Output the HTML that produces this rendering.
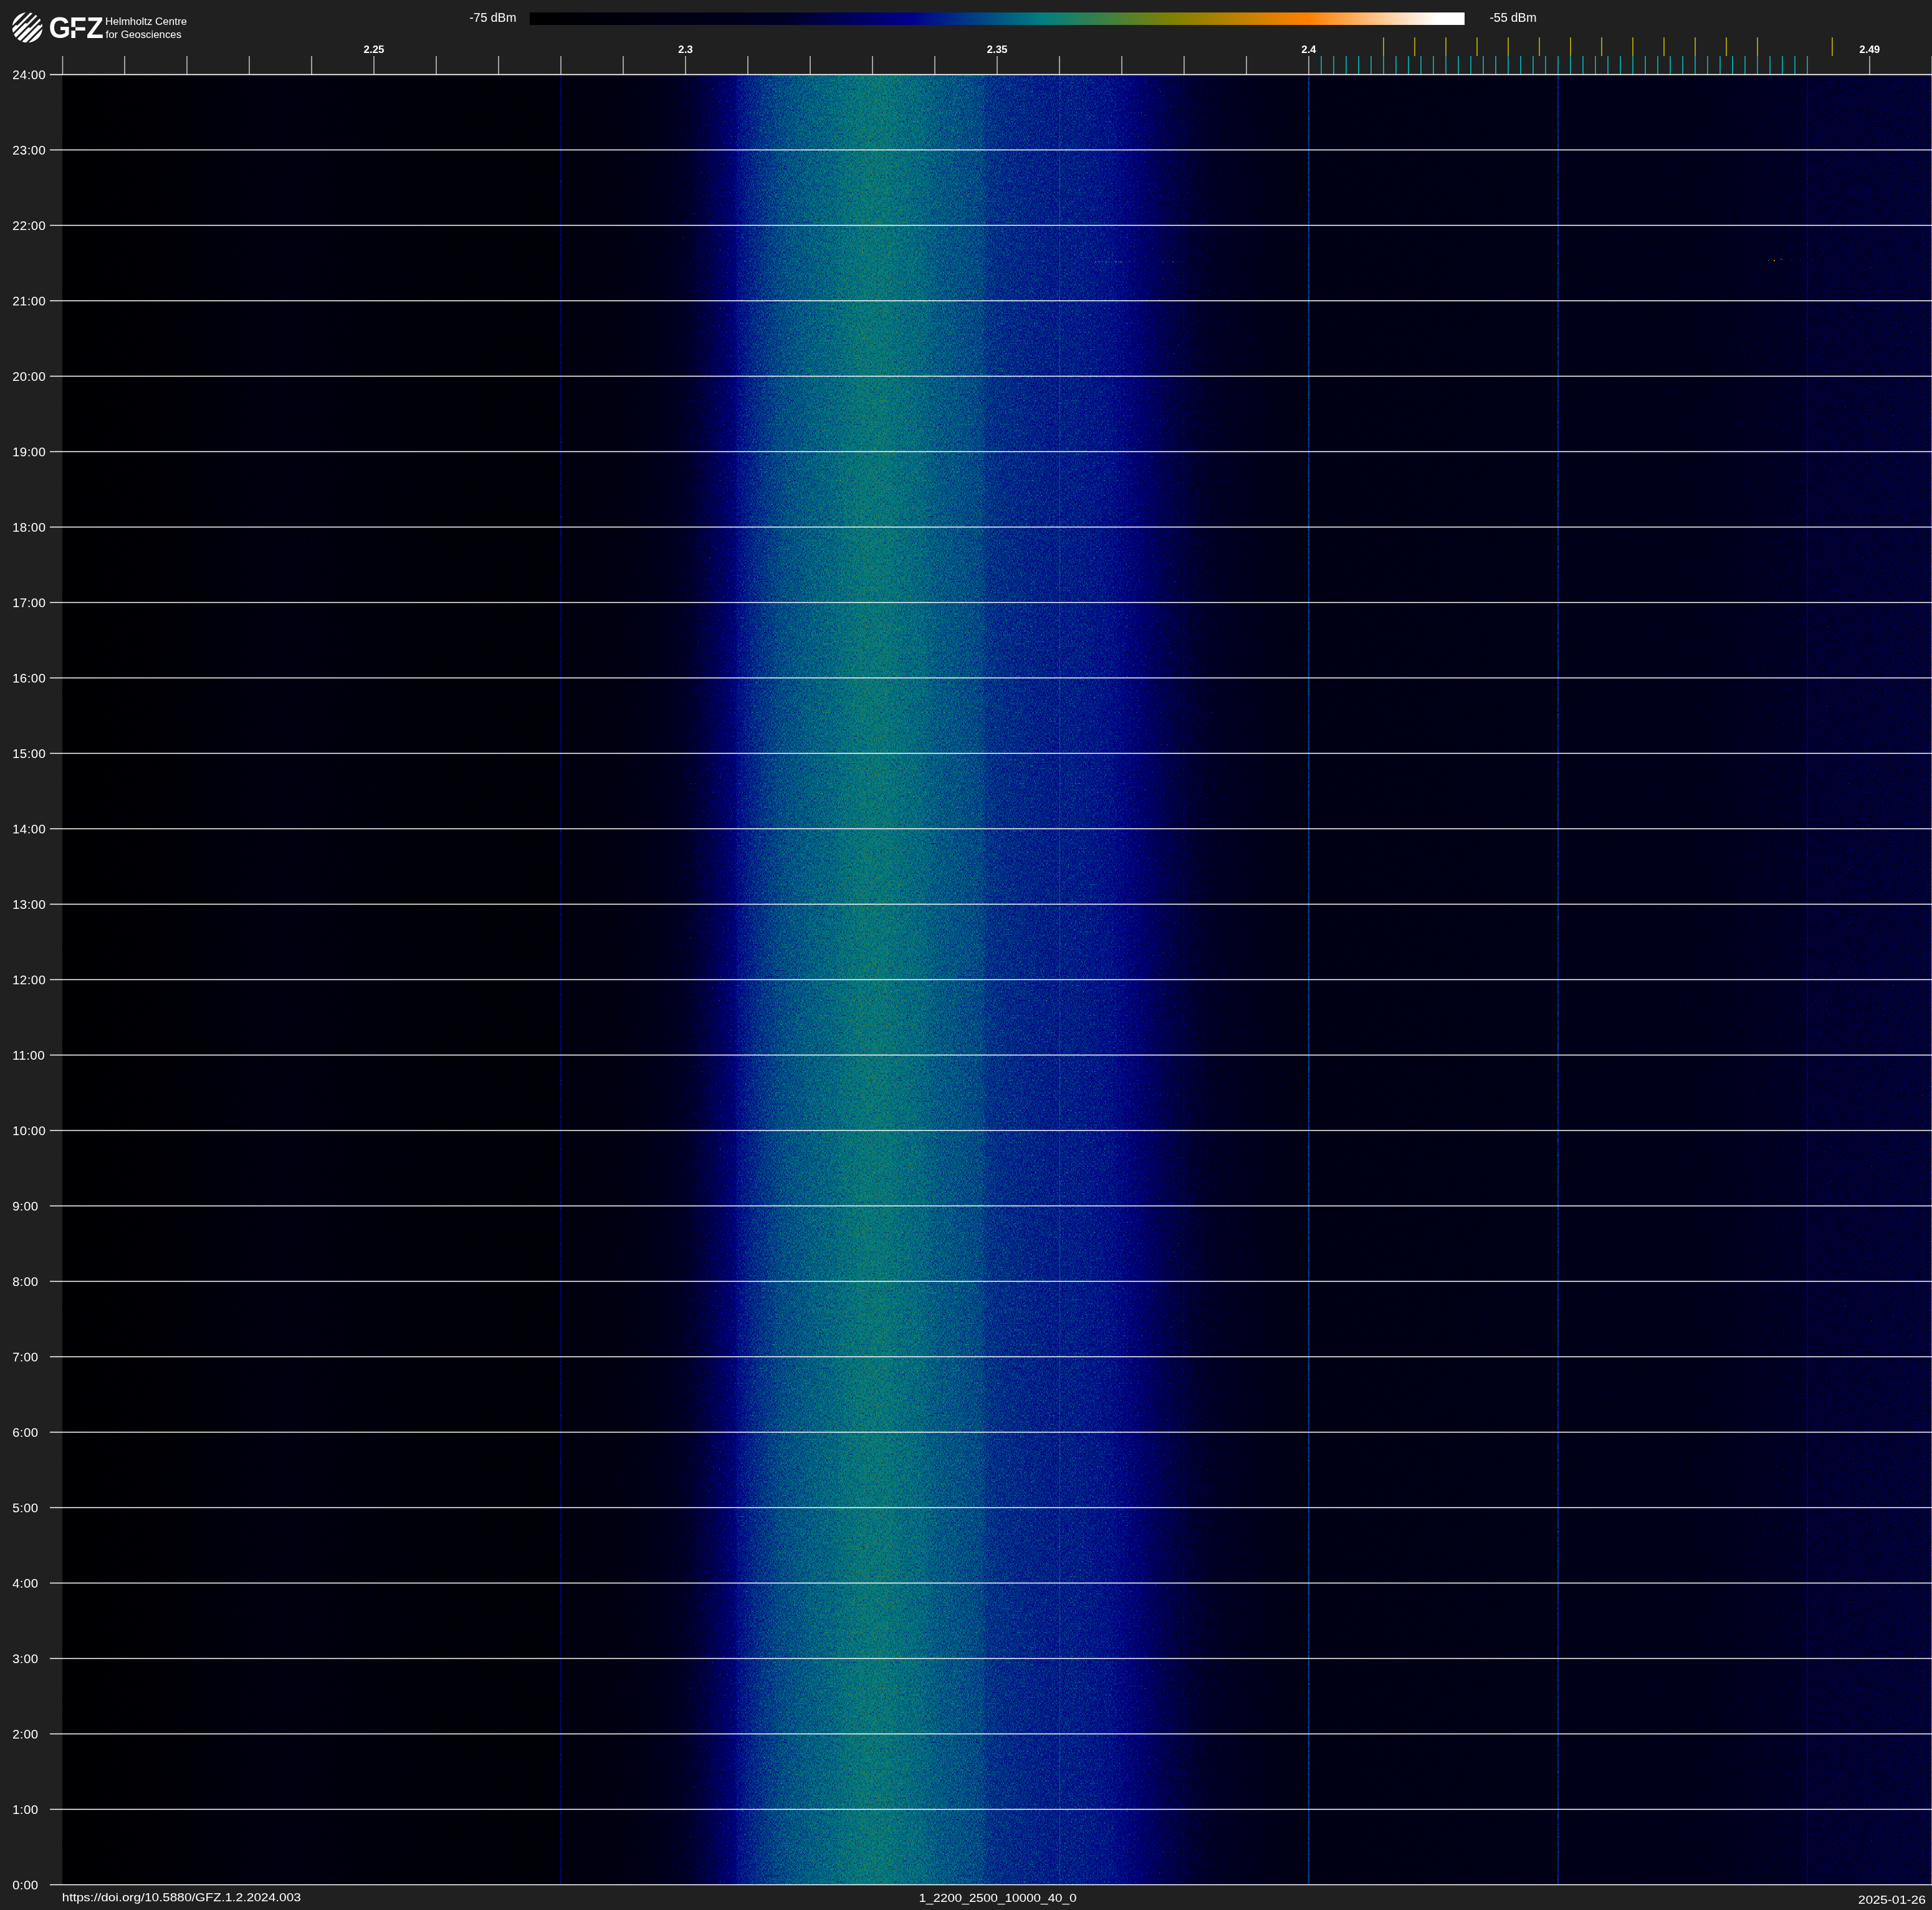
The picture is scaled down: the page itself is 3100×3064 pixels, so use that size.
<!DOCTYPE html>
<html lang="en"><head><meta charset="utf-8"><title>GFZ spectrum 1_2200_2500_10000_40_0 2025-01-26</title>
<style>
html,body{margin:0;padding:0;background:#202020;}
body{width:3100px;height:3064px;overflow:hidden;position:relative;font-family:"Liberation Sans",sans-serif;color:#fff;}
svg{position:absolute;left:0;top:0;display:block;will-change:transform;}
text{font-family:"Liberation Sans",sans-serif;fill:#fff;}
.hl{stroke:#fff;stroke-width:1.3;}
.tk{stroke:#cbcbcb;stroke-width:1.5;}
.ble{stroke:rgb(2,196,200);stroke-width:1.5;}
.wifi{stroke:rgb(203,196,3);stroke-width:1.5;}
.yl{font-size:20.5px;letter-spacing:0.45px;}
.fl{font-size:17px;font-weight:bold;text-anchor:middle;}
.ft{font-size:19px;}
</style></head><body>
<svg width="3100" height="3064" viewBox="0 0 3100 3064">
<defs>
<linearGradient id="val" gradientUnits="userSpaceOnUse" x1="100" y1="0" x2="3100" y2="0">
<stop offset="0.0000" stop-color="#050000"/>
<stop offset="0.0500" stop-color="#0b0000"/>
<stop offset="0.1000" stop-color="#1c0000"/>
<stop offset="0.1200" stop-color="#1f0000"/>
<stop offset="0.1533" stop-color="#1a0000"/>
<stop offset="0.2000" stop-color="#120000"/>
<stop offset="0.2600" stop-color="#110000"/>
<stop offset="0.2663" stop-color="#120000"/>
<stop offset="0.2670" stop-color="#1c0000"/>
<stop offset="0.2943" stop-color="#210000"/>
<stop offset="0.3080" stop-color="#2a0000"/>
<stop offset="0.3220" stop-color="#360000"/>
<stop offset="0.3357" stop-color="#450000"/>
<stop offset="0.3493" stop-color="#550000"/>
<stop offset="0.3603" stop-color="#620000"/>
<stop offset="0.3607" stop-color="#690000"/>
<stop offset="0.3700" stop-color="#730000"/>
<stop offset="0.3843" stop-color="#7d0000"/>
<stop offset="0.4017" stop-color="#830000"/>
<stop offset="0.4143" stop-color="#860000"/>
<stop offset="0.4150" stop-color="#870000"/>
<stop offset="0.4277" stop-color="#8b0000"/>
<stop offset="0.4413" stop-color="#8b0000"/>
<stop offset="0.4483" stop-color="#880000"/>
<stop offset="0.4600" stop-color="#860000"/>
<stop offset="0.4647" stop-color="#830000"/>
<stop offset="0.4700" stop-color="#810000"/>
<stop offset="0.4767" stop-color="#800000"/>
<stop offset="0.4833" stop-color="#7e0000"/>
<stop offset="0.4917" stop-color="#7c0000"/>
<stop offset="0.4943" stop-color="#770000"/>
<stop offset="0.5000" stop-color="#750000"/>
<stop offset="0.5103" stop-color="#730000"/>
<stop offset="0.5310" stop-color="#6f0000"/>
<stop offset="0.5403" stop-color="#700000"/>
<stop offset="0.5610" stop-color="#6b0000"/>
<stop offset="0.5747" stop-color="#600000"/>
<stop offset="0.5887" stop-color="#540000"/>
<stop offset="0.6023" stop-color="#4a0000"/>
<stop offset="0.6160" stop-color="#410000"/>
<stop offset="0.6300" stop-color="#3b0000"/>
<stop offset="0.6437" stop-color="#330000"/>
<stop offset="0.6643" stop-color="#290000"/>
<stop offset="0.7333" stop-color="#2b0000"/>
<stop offset="0.7997" stop-color="#2d0000"/>
<stop offset="0.8003" stop-color="#300000"/>
<stop offset="0.8767" stop-color="#330000"/>
<stop offset="0.9023" stop-color="#3c0000"/>
<stop offset="0.9283" stop-color="#410000"/>
<stop offset="0.9330" stop-color="#420000"/>
<stop offset="0.9337" stop-color="#460000"/>
<stop offset="1.0000" stop-color="#490000"/>
</linearGradient>
<linearGradient id="val2" gradientUnits="userSpaceOnUse" x1="0" y1="0" x2="3000" y2="0">
<stop offset="0.0000" stop-color="#05ff00"/>
<stop offset="0.0500" stop-color="#0bff00"/>
<stop offset="0.1000" stop-color="#1cff00"/>
<stop offset="0.1200" stop-color="#1fff00"/>
<stop offset="0.1533" stop-color="#1aff00"/>
<stop offset="0.2000" stop-color="#12ff00"/>
<stop offset="0.2600" stop-color="#11ff00"/>
<stop offset="0.2663" stop-color="#12ff00"/>
<stop offset="0.2670" stop-color="#1cff00"/>
<stop offset="0.2943" stop-color="#21ff00"/>
<stop offset="0.3080" stop-color="#2aff00"/>
<stop offset="0.3220" stop-color="#36ff00"/>
<stop offset="0.3357" stop-color="#45ff00"/>
<stop offset="0.3493" stop-color="#55ff00"/>
<stop offset="0.3603" stop-color="#62ff00"/>
<stop offset="0.3607" stop-color="#69ff00"/>
<stop offset="0.3700" stop-color="#73ff00"/>
<stop offset="0.3843" stop-color="#7dff00"/>
<stop offset="0.4017" stop-color="#83ff00"/>
<stop offset="0.4143" stop-color="#86ff00"/>
<stop offset="0.4150" stop-color="#87ff00"/>
<stop offset="0.4277" stop-color="#8bff00"/>
<stop offset="0.4413" stop-color="#8bff00"/>
<stop offset="0.4483" stop-color="#88ff00"/>
<stop offset="0.4600" stop-color="#86ff00"/>
<stop offset="0.4647" stop-color="#83ff00"/>
<stop offset="0.4700" stop-color="#81ff00"/>
<stop offset="0.4767" stop-color="#80ff00"/>
<stop offset="0.4833" stop-color="#7eff00"/>
<stop offset="0.4917" stop-color="#7cff00"/>
<stop offset="0.4943" stop-color="#77ff00"/>
<stop offset="0.5000" stop-color="#75ff00"/>
<stop offset="0.5103" stop-color="#73ff00"/>
<stop offset="0.5310" stop-color="#6fff00"/>
<stop offset="0.5403" stop-color="#70ff00"/>
<stop offset="0.5610" stop-color="#6bff00"/>
<stop offset="0.5747" stop-color="#60ff00"/>
<stop offset="0.5887" stop-color="#54ff00"/>
<stop offset="0.6023" stop-color="#4aff00"/>
<stop offset="0.6160" stop-color="#41ff00"/>
<stop offset="0.6300" stop-color="#3bff00"/>
<stop offset="0.6437" stop-color="#33ff00"/>
<stop offset="0.6643" stop-color="#29ff00"/>
<stop offset="0.7333" stop-color="#2bff00"/>
<stop offset="0.7997" stop-color="#2dff00"/>
<stop offset="0.8003" stop-color="#30ff00"/>
<stop offset="0.8767" stop-color="#33ff00"/>
<stop offset="0.9023" stop-color="#3cff00"/>
<stop offset="0.9283" stop-color="#41ff00"/>
<stop offset="0.9330" stop-color="#42ff00"/>
<stop offset="0.9337" stop-color="#46ff00"/>
<stop offset="1.0000" stop-color="#49ff00"/>
</linearGradient>
<pattern id="rows" patternUnits="userSpaceOnUse" x="100" y="120" width="3000" height="2">
<rect x="0" y="0" width="3000" height="1" fill="url(#val2)"/>
<rect x="799" y="0" width="2" height="1" fill="#62ff00"/>
<rect x="1999" y="0" width="2" height="1" fill="#78ff00"/>
<rect x="2399" y="0" width="2" height="1" fill="#73ff00"/>
<rect x="2799" y="0" width="2" height="1" fill="#5cff00"/>
<rect x="1600" y="0" width="1" height="1" fill="#80ff00"/>
<rect x="399" y="0" width="2" height="1" fill="#2bff00"/>
<rect x="1199" y="0" width="1" height="1" fill="#85ff00"/>
<rect x="500" y="0" width="1" height="1" fill="#29ff00"/>
<rect x="79" y="0" width="1" height="1" fill="#21ff00"/>
<rect x="1799" y="0" width="1" height="1" fill="#5cff00"/>
<rect x="2999" y="0" width="1" height="1" fill="#ccff00"/>
</pattern>
<linearGradient id="cbar" x1="0" y1="0" x2="1" y2="0">
<stop offset="0.000" stop-color="rgb(0,0,0)"/>
<stop offset="0.267" stop-color="rgb(0,0,35)"/>
<stop offset="0.407" stop-color="rgb(0,0,139)"/>
<stop offset="0.549" stop-color="rgb(0,128,128)"/>
<stop offset="0.688" stop-color="rgb(128,128,0)"/>
<stop offset="0.833" stop-color="rgb(255,128,0)"/>
<stop offset="0.971" stop-color="rgb(255,255,255)"/>
<stop offset="1.000" stop-color="rgb(255,255,255)"/>
</linearGradient>
<filter id="spec" filterUnits="userSpaceOnUse" x="100" y="120" width="3000" height="2904" color-interpolation-filters="sRGB">
<feTurbulence type="fractalNoise" baseFrequency="0.83 0.71" numOctaves="1" seed="7" result="n0"/>
<feColorMatrix in="n0" type="matrix" values="1 0 0 0 0  1 0 0 0 0  1 0 0 0 0  0 0 0 0 1" result="n1"/>
<feComponentTransfer in="n1" result="ns">
<feFuncR type="table" tableValues="0.2826 0.2894 0.2963 0.3032 0.3100 0.3169 0.3237 0.3306 0.3375 0.3443 0.3512 0.3580 0.3649 0.3718 0.3786 0.3855 0.3923 0.3992 0.4060 0.4121 0.4172 0.4223 0.4273 0.4324 0.4373 0.4422 0.4470 0.4519 0.4563 0.4600 0.4636 0.4672 0.4709 0.4745 0.4782 0.4818 0.4854 0.4891 0.4927 0.4964 0.5000 0.5036 0.5073 0.5109 0.5146 0.5182 0.5218 0.5255 0.5291 0.5328 0.5364 0.5400 0.5437 0.5489 0.5550 0.5610 0.5671 0.5737 0.5808 0.5878 0.5949 0.6020 0.6128 0.6262 0.6397 0.6531 0.6666 0.6800 0.6935 0.7069 0.7204 0.7338 0.7473 0.7608 0.7742 0.7877 0.8011 0.8146 0.8280 0.8415 0.8549"/>
<feFuncG type="table" tableValues="0.2826 0.2894 0.2963 0.3032 0.3100 0.3169 0.3237 0.3306 0.3375 0.3443 0.3512 0.3580 0.3649 0.3718 0.3786 0.3855 0.3923 0.3992 0.4060 0.4121 0.4172 0.4223 0.4273 0.4324 0.4373 0.4422 0.4470 0.4519 0.4563 0.4600 0.4636 0.4672 0.4709 0.4745 0.4782 0.4818 0.4854 0.4891 0.4927 0.4964 0.5000 0.5036 0.5073 0.5109 0.5146 0.5182 0.5218 0.5255 0.5291 0.5328 0.5364 0.5400 0.5437 0.5489 0.5550 0.5610 0.5671 0.5737 0.5808 0.5878 0.5949 0.6020 0.6128 0.6262 0.6397 0.6531 0.6666 0.6800 0.6935 0.7069 0.7204 0.7338 0.7473 0.7608 0.7742 0.7877 0.8011 0.8146 0.8280 0.8415 0.8549"/>
<feFuncB type="table" tableValues="0.2826 0.2894 0.2963 0.3032 0.3100 0.3169 0.3237 0.3306 0.3375 0.3443 0.3512 0.3580 0.3649 0.3718 0.3786 0.3855 0.3923 0.3992 0.4060 0.4121 0.4172 0.4223 0.4273 0.4324 0.4373 0.4422 0.4470 0.4519 0.4563 0.4600 0.4636 0.4672 0.4709 0.4745 0.4782 0.4818 0.4854 0.4891 0.4927 0.4964 0.5000 0.5036 0.5073 0.5109 0.5146 0.5182 0.5218 0.5255 0.5291 0.5328 0.5364 0.5400 0.5437 0.5489 0.5550 0.5610 0.5671 0.5737 0.5808 0.5878 0.5949 0.6020 0.6128 0.6262 0.6397 0.6531 0.6666 0.6800 0.6935 0.7069 0.7204 0.7338 0.7473 0.7608 0.7742 0.7877 0.8011 0.8146 0.8280 0.8415 0.8549"/>
</feComponentTransfer>
<feColorMatrix in="SourceGraphic" type="matrix" values="0 0 0 0 1  0 0 0 0 1  0 0 0 0 1  0 1 0 0 0" result="mask"/>
<feColorMatrix in="SourceGraphic" type="matrix" values="1 0 0 0 0  1 0 0 0 0  1 0 0 0 0  0 0 0 0 1" result="src"/>
<feComposite in="ns" in2="mask" operator="in" result="ev"/>
<feOffset in="ev" dx="0" dy="1" result="od"/>
<feMerge result="n"><feMergeNode in="od"/><feMergeNode in="ev"/></feMerge>
<feComposite in="src" in2="n" operator="arithmetic" k1="0" k2="1" k3="1" k4="-0.5" result="v"/>
<feComponentTransfer in="v">
<feFuncR type="table" tableValues="0.000 0.000 0.000 0.000 0.000 0.000 0.000 0.000 0.000 0.000 0.000 0.000 0.000 0.000 0.000 0.000 0.000 0.000 0.000 0.000 0.000 0.000 0.000 0.000 0.000 0.000 0.000 0.000 0.000 0.000 0.000 0.000 0.000 0.000 0.000 0.000 0.000 0.000 0.000 0.000 0.000 0.000 0.000 0.000 0.000 0.000 0.000 0.000 0.000 0.000 0.000 0.000 0.000 0.000 0.000 0.004 0.040 0.076 0.112 0.148 0.184 0.220 0.256 0.293 0.329 0.365 0.401 0.437 0.473 0.509 0.543 0.578 0.612 0.646 0.681 0.715 0.749 0.784 0.818 0.852 0.887 0.921 0.955 0.990 1.000 1.000 1.000 1.000 1.000 1.000 1.000 1.000 1.000 1.000 1.000 1.000 1.000 1.000 1.000 1.000 1.000"/>
<feFuncG type="table" tableValues="0.000 0.000 0.000 0.000 0.000 0.000 0.000 0.000 0.000 0.000 0.000 0.000 0.000 0.000 0.000 0.000 0.000 0.000 0.000 0.000 0.000 0.000 0.000 0.000 0.000 0.000 0.000 0.000 0.000 0.000 0.000 0.000 0.000 0.000 0.000 0.000 0.000 0.000 0.000 0.000 0.000 0.011 0.046 0.081 0.117 0.152 0.187 0.223 0.258 0.293 0.329 0.364 0.399 0.435 0.470 0.502 0.502 0.502 0.502 0.502 0.502 0.502 0.502 0.502 0.502 0.502 0.502 0.502 0.502 0.502 0.502 0.502 0.502 0.502 0.502 0.502 0.502 0.502 0.502 0.502 0.502 0.502 0.502 0.502 0.527 0.563 0.599 0.635 0.672 0.708 0.744 0.780 0.816 0.852 0.888 0.924 0.960 0.996 1.000 1.000 1.000"/>
<feFuncB type="table" tableValues="0.000 0.005 0.010 0.015 0.021 0.026 0.031 0.036 0.041 0.046 0.051 0.057 0.062 0.067 0.072 0.077 0.082 0.087 0.093 0.098 0.103 0.108 0.113 0.118 0.123 0.129 0.134 0.146 0.175 0.204 0.233 0.263 0.292 0.321 0.350 0.379 0.408 0.437 0.466 0.496 0.525 0.544 0.541 0.538 0.535 0.532 0.529 0.526 0.523 0.520 0.517 0.514 0.511 0.508 0.505 0.498 0.462 0.426 0.390 0.354 0.318 0.282 0.246 0.209 0.173 0.137 0.101 0.065 0.029 0.000 0.000 0.000 0.000 0.000 0.000 0.000 0.000 0.000 0.000 0.000 0.000 0.000 0.000 0.000 0.051 0.123 0.196 0.268 0.341 0.413 0.486 0.558 0.630 0.703 0.775 0.848 0.920 0.993 1.000 1.000 1.000"/>
</feComponentTransfer>
</filter>
</defs>
<g filter="url(#spec)" shape-rendering="crispEdges">
<rect x="100" y="120" width="3000" height="2904" fill="url(#val)"/>
<rect x="899" y="120" width="2" height="2904" fill="#620000"/>
<rect x="2099" y="120" width="2" height="2904" fill="#780000"/>
<rect x="2499" y="120" width="2" height="2904" fill="#730000"/>
<rect x="2899" y="120" width="2" height="2904" fill="#5c0000"/>
<rect x="1700" y="120" width="1" height="2904" fill="#800000"/>
<rect x="499" y="120" width="2" height="2904" fill="#2b0000"/>
<rect x="1299" y="120" width="1" height="2904" fill="#850000"/>
<rect x="600" y="120" width="1" height="2904" fill="#290000"/>
<rect x="179" y="120" width="1" height="2904" fill="#210000"/>
<rect x="1899" y="120" width="1" height="2904" fill="#5c0000"/>
<rect x="3099" y="120" width="1" height="2904" fill="#cc0000"/>
<rect x="100" y="120" width="3000" height="2904" fill="url(#rows)"/>
<rect x="1757" y="419" width="2" height="1" fill="#a80000"/>
<rect x="1757" y="420" width="2" height="1" fill="#a8ff00"/>
<rect x="1762" y="419" width="3" height="1" fill="#800000"/>
<rect x="1762" y="420" width="3" height="1" fill="#80ff00"/>
<rect x="1768" y="419" width="2" height="1" fill="#780000"/>
<rect x="1768" y="420" width="2" height="1" fill="#78ff00"/>
<rect x="1773" y="419" width="3" height="1" fill="#870000"/>
<rect x="1773" y="420" width="3" height="1" fill="#87ff00"/>
<rect x="1779" y="419" width="1" height="1" fill="#9e0000"/>
<rect x="1779" y="420" width="1" height="1" fill="#9eff00"/>
<rect x="1783" y="419" width="2" height="1" fill="#7a0000"/>
<rect x="1783" y="420" width="2" height="1" fill="#7aff00"/>
<rect x="1789" y="419" width="3" height="1" fill="#940000"/>
<rect x="1789" y="420" width="3" height="1" fill="#94ff00"/>
<rect x="1794" y="419" width="2" height="1" fill="#800000"/>
<rect x="1794" y="420" width="2" height="1" fill="#80ff00"/>
<rect x="1797" y="419" width="2" height="1" fill="#990000"/>
<rect x="1797" y="420" width="2" height="1" fill="#99ff00"/>
<rect x="1800" y="419" width="1" height="1" fill="#8f0000"/>
<rect x="1800" y="420" width="1" height="1" fill="#8fff00"/>
<rect x="1838" y="419" width="2" height="1" fill="#660000"/>
<rect x="1838" y="420" width="2" height="1" fill="#66ff00"/>
<rect x="1851" y="419" width="4" height="1" fill="#690000"/>
<rect x="1851" y="420" width="4" height="1" fill="#69ff00"/>
<rect x="1864" y="419" width="3" height="1" fill="#780000"/>
<rect x="1864" y="420" width="3" height="1" fill="#78ff00"/>
<rect x="1872" y="419" width="2" height="1" fill="#660000"/>
<rect x="1872" y="420" width="2" height="1" fill="#66ff00"/>
<rect x="1881" y="419" width="2" height="1" fill="#850000"/>
<rect x="1881" y="420" width="2" height="1" fill="#85ff00"/>
<rect x="1888" y="419" width="3" height="1" fill="#660000"/>
<rect x="1888" y="420" width="3" height="1" fill="#66ff00"/>
<rect x="1897" y="419" width="2" height="1" fill="#610000"/>
<rect x="1897" y="420" width="2" height="1" fill="#61ff00"/>
<rect x="2837" y="417" width="1" height="1" fill="#8c0000"/>
<rect x="2837" y="418" width="1" height="1" fill="#8cff00"/>
<rect x="2846" y="417" width="2" height="1" fill="#d40000"/>
<rect x="2846" y="418" width="2" height="1" fill="#d4ff00"/>
<rect x="2857" y="415" width="2" height="1" fill="#8c0000"/>
<rect x="2857" y="416" width="2" height="1" fill="#8cff00"/>
<rect x="2874" y="417" width="1" height="1" fill="#780000"/>
<rect x="2874" y="418" width="1" height="1" fill="#78ff00"/>
<rect x="2888" y="417" width="1" height="1" fill="#730000"/>
<rect x="2888" y="418" width="1" height="1" fill="#73ff00"/>
</g>
<rect x="850" y="20" width="1500" height="20" fill="url(#cbar)"/>
<text x="753.2" y="35.2" style="font-size:20.5px" textLength="75.3" lengthAdjust="spacingAndGlyphs">-75 dBm</text>
<text x="2390.2" y="35.2" style="font-size:20.5px" textLength="75.3" lengthAdjust="spacingAndGlyphs">-55 dBm</text>
<line class="tk" x1="100.5" y1="90" x2="100.5" y2="120"/>
<line class="tk" x1="200.0" y1="90" x2="200.0" y2="120"/>
<line class="tk" x1="300.0" y1="90" x2="300.0" y2="120"/>
<line class="tk" x1="400.0" y1="90" x2="400.0" y2="120"/>
<line class="tk" x1="500.0" y1="90" x2="500.0" y2="120"/>
<line class="tk" x1="600.0" y1="90" x2="600.0" y2="120"/>
<line class="tk" x1="700.0" y1="90" x2="700.0" y2="120"/>
<line class="tk" x1="800.0" y1="90" x2="800.0" y2="120"/>
<line class="tk" x1="900.0" y1="90" x2="900.0" y2="120"/>
<line class="tk" x1="1000.0" y1="90" x2="1000.0" y2="120"/>
<line class="tk" x1="1100.0" y1="90" x2="1100.0" y2="120"/>
<line class="tk" x1="1200.0" y1="90" x2="1200.0" y2="120"/>
<line class="tk" x1="1300.0" y1="90" x2="1300.0" y2="120"/>
<line class="tk" x1="1400.0" y1="90" x2="1400.0" y2="120"/>
<line class="tk" x1="1500.0" y1="90" x2="1500.0" y2="120"/>
<line class="tk" x1="1600.0" y1="90" x2="1600.0" y2="120"/>
<line class="tk" x1="1700.0" y1="90" x2="1700.0" y2="120"/>
<line class="tk" x1="1800.0" y1="90" x2="1800.0" y2="120"/>
<line class="tk" x1="1900.0" y1="90" x2="1900.0" y2="120"/>
<line class="tk" x1="2000.0" y1="90" x2="2000.0" y2="120"/>
<line class="tk" x1="2100.0" y1="90" x2="2100.0" y2="120"/>
<line class="tk" x1="3000.0" y1="90" x2="3000.0" y2="120"/>
<line class="tk" x1="3100.0" y1="90" x2="3100.0" y2="120"/>
<line class="ble" x1="2120.0" y1="90" x2="2120.0" y2="119"/>
<line class="ble" x1="2140.0" y1="90" x2="2140.0" y2="119"/>
<line class="ble" x1="2160.0" y1="90" x2="2160.0" y2="119"/>
<line class="ble" x1="2180.0" y1="90" x2="2180.0" y2="119"/>
<line class="ble" x1="2200.0" y1="90" x2="2200.0" y2="119"/>
<line class="ble" x1="2220.0" y1="90" x2="2220.0" y2="119"/>
<line class="ble" x1="2240.0" y1="90" x2="2240.0" y2="119"/>
<line class="ble" x1="2260.0" y1="90" x2="2260.0" y2="119"/>
<line class="ble" x1="2280.0" y1="90" x2="2280.0" y2="119"/>
<line class="ble" x1="2300.0" y1="90" x2="2300.0" y2="119"/>
<line class="ble" x1="2320.0" y1="90" x2="2320.0" y2="119"/>
<line class="ble" x1="2340.0" y1="90" x2="2340.0" y2="119"/>
<line class="ble" x1="2360.0" y1="90" x2="2360.0" y2="119"/>
<line class="ble" x1="2380.0" y1="90" x2="2380.0" y2="119"/>
<line class="ble" x1="2400.0" y1="90" x2="2400.0" y2="119"/>
<line class="ble" x1="2420.0" y1="90" x2="2420.0" y2="119"/>
<line class="ble" x1="2440.0" y1="90" x2="2440.0" y2="119"/>
<line class="ble" x1="2460.0" y1="90" x2="2460.0" y2="119"/>
<line class="ble" x1="2480.0" y1="90" x2="2480.0" y2="119"/>
<line class="ble" x1="2500.0" y1="90" x2="2500.0" y2="119"/>
<line class="ble" x1="2520.0" y1="90" x2="2520.0" y2="119"/>
<line class="ble" x1="2540.0" y1="90" x2="2540.0" y2="119"/>
<line class="ble" x1="2560.0" y1="90" x2="2560.0" y2="119"/>
<line class="ble" x1="2580.0" y1="90" x2="2580.0" y2="119"/>
<line class="ble" x1="2600.0" y1="90" x2="2600.0" y2="119"/>
<line class="ble" x1="2620.0" y1="90" x2="2620.0" y2="119"/>
<line class="ble" x1="2640.0" y1="90" x2="2640.0" y2="119"/>
<line class="ble" x1="2660.0" y1="90" x2="2660.0" y2="119"/>
<line class="ble" x1="2680.0" y1="90" x2="2680.0" y2="119"/>
<line class="ble" x1="2700.0" y1="90" x2="2700.0" y2="119"/>
<line class="ble" x1="2720.0" y1="90" x2="2720.0" y2="119"/>
<line class="ble" x1="2740.0" y1="90" x2="2740.0" y2="119"/>
<line class="ble" x1="2760.0" y1="90" x2="2760.0" y2="119"/>
<line class="ble" x1="2780.0" y1="90" x2="2780.0" y2="119"/>
<line class="ble" x1="2800.0" y1="90" x2="2800.0" y2="119"/>
<line class="ble" x1="2820.0" y1="90" x2="2820.0" y2="119"/>
<line class="ble" x1="2840.0" y1="90" x2="2840.0" y2="119"/>
<line class="ble" x1="2860.0" y1="90" x2="2860.0" y2="119"/>
<line class="ble" x1="2880.0" y1="90" x2="2880.0" y2="119"/>
<line class="ble" x1="2900.0" y1="90" x2="2900.0" y2="119"/>
<line class="wifi" x1="2220.0" y1="60" x2="2220.0" y2="90"/>
<line class="wifi" x1="2270.0" y1="60" x2="2270.0" y2="90"/>
<line class="wifi" x1="2320.0" y1="60" x2="2320.0" y2="90"/>
<line class="wifi" x1="2370.0" y1="60" x2="2370.0" y2="90"/>
<line class="wifi" x1="2420.0" y1="60" x2="2420.0" y2="90"/>
<line class="wifi" x1="2470.0" y1="60" x2="2470.0" y2="90"/>
<line class="wifi" x1="2520.0" y1="60" x2="2520.0" y2="90"/>
<line class="wifi" x1="2570.0" y1="60" x2="2570.0" y2="90"/>
<line class="wifi" x1="2620.0" y1="60" x2="2620.0" y2="90"/>
<line class="wifi" x1="2670.0" y1="60" x2="2670.0" y2="90"/>
<line class="wifi" x1="2720.0" y1="60" x2="2720.0" y2="90"/>
<line class="wifi" x1="2770.0" y1="60" x2="2770.0" y2="90"/>
<line class="wifi" x1="2820.0" y1="60" x2="2820.0" y2="90"/>
<line class="wifi" x1="2940.0" y1="60" x2="2940.0" y2="90"/>
<text class="fl" x="600" y="84.8">2.25</text>
<text class="fl" x="1100" y="84.8">2.3</text>
<text class="fl" x="1600" y="84.8">2.35</text>
<text class="fl" x="2100" y="84.8">2.4</text>
<text class="fl" x="3000" y="84.8">2.49</text>
<line class="hl" x1="80" y1="3023.50" x2="3100" y2="3023.50"/>
<text class="yl" x="20" y="3030.9">0:00</text>
<line class="hl" x1="80" y1="2902.50" x2="3100" y2="2902.50"/>
<text class="yl" x="20" y="2909.9">1:00</text>
<line class="hl" x1="80" y1="2781.50" x2="3100" y2="2781.50"/>
<text class="yl" x="20" y="2788.9">2:00</text>
<line class="hl" x1="80" y1="2660.50" x2="3100" y2="2660.50"/>
<text class="yl" x="20" y="2667.9">3:00</text>
<line class="hl" x1="80" y1="2539.50" x2="3100" y2="2539.50"/>
<text class="yl" x="20" y="2546.9">4:00</text>
<line class="hl" x1="80" y1="2418.50" x2="3100" y2="2418.50"/>
<text class="yl" x="20" y="2425.9">5:00</text>
<line class="hl" x1="80" y1="2297.50" x2="3100" y2="2297.50"/>
<text class="yl" x="20" y="2304.9">6:00</text>
<line class="hl" x1="80" y1="2176.50" x2="3100" y2="2176.50"/>
<text class="yl" x="20" y="2183.9">7:00</text>
<line class="hl" x1="80" y1="2055.50" x2="3100" y2="2055.50"/>
<text class="yl" x="20" y="2062.9">8:00</text>
<line class="hl" x1="80" y1="1934.50" x2="3100" y2="1934.50"/>
<text class="yl" x="20" y="1941.9">9:00</text>
<line class="hl" x1="80" y1="1813.50" x2="3100" y2="1813.50"/>
<text class="yl" x="20" y="1820.9">10:00</text>
<line class="hl" x1="80" y1="1692.50" x2="3100" y2="1692.50"/>
<text class="yl" x="20" y="1699.9">11:00</text>
<line class="hl" x1="80" y1="1571.50" x2="3100" y2="1571.50"/>
<text class="yl" x="20" y="1578.9">12:00</text>
<line class="hl" x1="80" y1="1450.50" x2="3100" y2="1450.50"/>
<text class="yl" x="20" y="1457.9">13:00</text>
<line class="hl" x1="80" y1="1329.50" x2="3100" y2="1329.50"/>
<text class="yl" x="20" y="1336.9">14:00</text>
<line class="hl" x1="80" y1="1208.50" x2="3100" y2="1208.50"/>
<text class="yl" x="20" y="1215.9">15:00</text>
<line class="hl" x1="80" y1="1087.50" x2="3100" y2="1087.50"/>
<text class="yl" x="20" y="1094.9">16:00</text>
<line class="hl" x1="80" y1="966.50" x2="3100" y2="966.50"/>
<text class="yl" x="20" y="973.9">17:00</text>
<line class="hl" x1="80" y1="845.50" x2="3100" y2="845.50"/>
<text class="yl" x="20" y="852.9">18:00</text>
<line class="hl" x1="80" y1="724.50" x2="3100" y2="724.50"/>
<text class="yl" x="20" y="731.9">19:00</text>
<line class="hl" x1="80" y1="603.50" x2="3100" y2="603.50"/>
<text class="yl" x="20" y="610.9">20:00</text>
<line class="hl" x1="80" y1="482.50" x2="3100" y2="482.50"/>
<text class="yl" x="20" y="489.9">21:00</text>
<line class="hl" x1="80" y1="361.50" x2="3100" y2="361.50"/>
<text class="yl" x="20" y="368.9">22:00</text>
<line class="hl" x1="80" y1="240.50" x2="3100" y2="240.50"/>
<text class="yl" x="20" y="247.9">23:00</text>
<line class="hl" x1="80" y1="119.70" x2="3100" y2="119.70" style="stroke-width:1.7"/>
<text class="yl" x="20" y="127.1">24:00</text>
<text class="ft" x="99.5" y="3050" textLength="383.5" lengthAdjust="spacingAndGlyphs">https://doi.org/10.5880/GFZ.1.2.2024.003</text>
<text class="ft" x="1474.5" y="3051" textLength="253" lengthAdjust="spacingAndGlyphs">1_2200_2500_10000_40_0</text>
<text class="ft" x="2981.6" y="3054" textLength="108.5" lengthAdjust="spacingAndGlyphs">2025-01-26</text>
<g id="logo">
<circle cx="43.9" cy="44.1" r="24.3" fill="#fff"/>
<g fill="#202020">
<polygon points="12.62,48.62 48.62,12.62 52.47,16.47 28.17,40.77 25.16,40.16 14.66,50.66"/>
<polygon points="18.75,54.75 54.75,18.75 58.60,22.60 43.55,37.65 40.54,37.04 20.79,56.79"/>
<polygon points="24.87,60.87 60.87,24.87 64.72,28.72 48.72,44.72 45.71,44.11 26.91,62.91"/>
<polygon points="31.00,67.00 67.00,31.00 70.84,34.85 64.75,40.95 61.74,40.34 33.04,69.03"/>
<polygon points="37.12,73.12 73.12,37.12 76.97,40.97 89.57,28.37 86.56,27.76 39.16,75.16"/>
</g>
<text transform="translate(0,61.1) scale(0.93,1)" x="84.48 120.0 149.2" y="0" style="font-size:48.1px;font-weight:bold">GFZ</text>
<rect x="113.2" y="43.3" width="7.9" height="5.8" fill="#202020"/>
<text x="169" y="40.4" style="font-size:16.5px" textLength="131" lengthAdjust="spacingAndGlyphs">Helmholtz Centre</text>
<text x="169.6" y="61.1" style="font-size:16.5px" textLength="121.5" lengthAdjust="spacingAndGlyphs">for Geosciences</text>
</g>
</svg>
</body></html>
